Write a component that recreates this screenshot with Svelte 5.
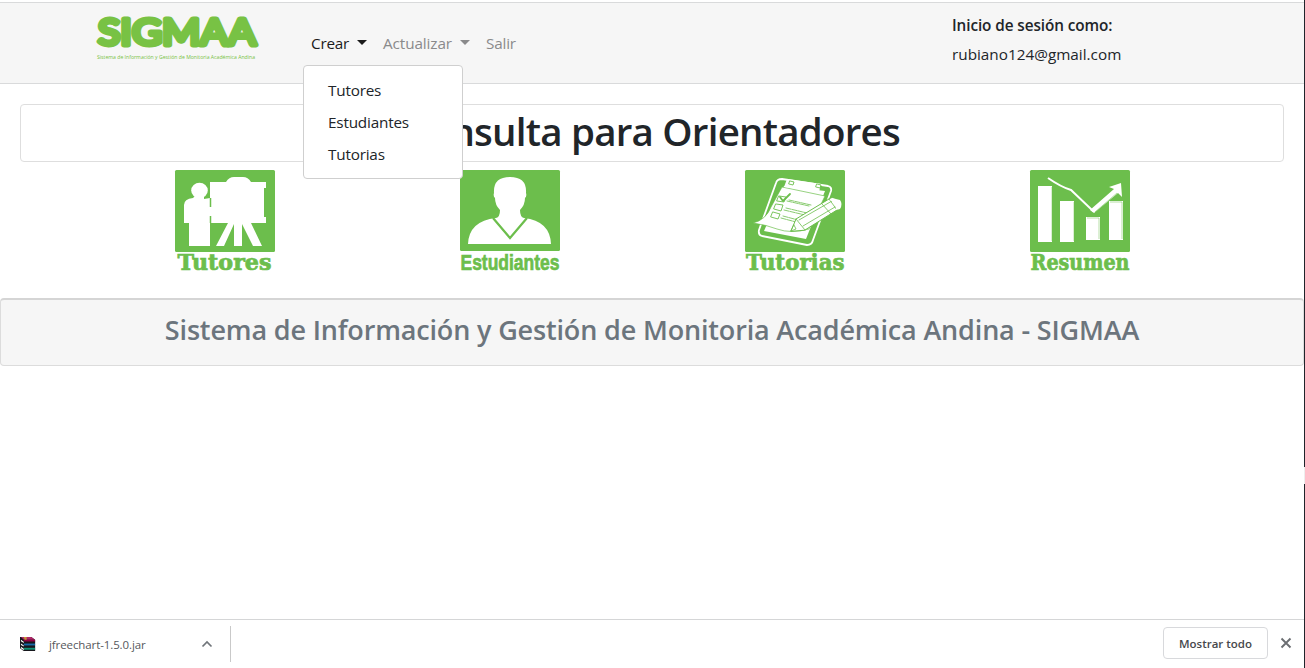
<script>
  const green = '#6cbe4c';
  const menu = ['Tutores', 'Estudiantes', 'Tutorias'];
  const cards = ['Tutores', 'Estudiantes', 'Tutorias', 'Resumen'];
</script>

<div class="page">
  <header>
    <div class="logo">
      <svg width="164" height="54" viewBox="0 0 164 54">
        <text class="brand" x="2" y="34" textLength="158" lengthAdjust="spacingAndGlyphs">SIGMAA</text>
        <text class="tag" x="1" y="48" textLength="158" lengthAdjust="spacingAndGlyphs">Sistema de Información y Gestión de Monitoria Académica Andina</text>
      </svg>
    </div>
    <nav>
      <div class="item active"><span class="crear">Crear</span><i class="caret"></i>
        <div class="menu">
          {#each menu as m}<span>{m}</span>{/each}
        </div>
      </div>
      <div class="item"><span class="act">Actualizar</span><i class="caret"></i></div>
      <div class="item"><span class="salir">Salir</span></div>
    </nav>
    <div class="session">
      <strong>Inicio de sesión como:</strong>
      <span>rubiano124@gmail.com</span>
    </div>
  </header>

  <main>
    <h1><span>Consulta para Orientadores</span></h1>
    <div class="cards">
      {#each cards as c, i}
        <div class="card">
          <svg width="104" height="108" viewBox="0 0 104 108">
            <rect x="0" y="0" width="100" height={i === 1 ? 81 : 82} rx="1.500" fill={green} />
            {#if i === 0}
              <g fill="#fff">
                <ellipse cx="24.500" cy="20.500" rx="8.300" ry="7.800" />
                <path d="M20 26h9v3l6-1V12h16q3-5 8-5h9q5 0 8 5h15v6h-2v29h2v6H76l11 23h-9L67 54V76h-8V54L49 76h-8l12-23H35V76H14V53H9V35q0-6 9-7z" />
              </g>
              <path d="M35.500 28v9M35.500 46v7" stroke={green} stroke-width="1.500" />
            {:else if i === 1}
              <path d="M8 74q1-23 28-26q4-1 4-8q-5-5-5-12q-2-2-1-5Q33 7 50 7t16 16q1 3-1 5q0 7-5 12q0 7 4 8q26 3 27 26z" fill="#fff" />
              <path d="M33 48l17 20l17-20" fill="none" stroke={green} stroke-width="2.200" />
            {:else if i === 2}
              <g stroke-linejoin="round" stroke-linecap="round">
                <path d="M37 9L83 16q4 1 3 5L68 70q-1 5-6 5L17 66q-4-1-3-6L31 13q1-4 6-4z" fill="none" stroke="#fff" stroke-width="1.800" />
                <path d="M39 16L80 21L61 69L19 61z" fill="#fff" />
                <path d="M8 53Q21 50 26 37L37 17L80 26L64 59Q46 64 32 59Q22 55 8 53z" fill="#fff" stroke={green} stroke-width="0.700" />
                <path d="M42 9l34 5l-2 8l-35-5z" fill="#fff" />
                <g fill="none" stroke={green} stroke-width="0.900">
                  <path d="M45 11l4 1l-1 3l-4-1zM72 14l4 1l-1 3l-4-1z" />
                  <path d="M34 26l7 1l-2 5l-7-1zM31 34l7 1l-2 6l-7-2zM28 42l7 2l-2 5l-7-2z" />
                  <path d="M35 27l3 4l7-7" stroke-width="1.800" />
                  <path d="M44 30l22 5M42 31l22 5M41 38l21 5M39 40l21 5M38 46l15 4M36 48l15 4" stroke-dasharray="5 1" stroke-width="0.800" />
                </g>
                <path d="M46 61l5-12l33-20q4-3 7 1l3 4q2 4-2 6L60 60z" fill="#fff" stroke={green} />
                <path d="M51 49l9 11M54 50l33-19M58 56l32-19M77 34l9 10M84 29l8 11M46 61l5-2l-2-4z" fill="none" stroke={green} stroke-width="0.800" />
                <path d="M87 28l8 2q3 4 0 9l-4 1q1-6-6-10z" fill="#fff" />
              </g>
            {:else}
              <g fill="#fff">
                <path d="M8 16h14v56H8zM30 31h14v41H30zM56 47h14v23H56zM79 31h14v39H79z" />
                <path d="M91 13l1 14l-4-4L64 43l-4-3L84 19l-5-2z" />
              </g>
              <path d="M18 8Q31 17 41 20L63 41L87 20" fill="none" stroke="#fff" stroke-width="2" />
              <path d="M22 17v54M44 32v39M57 48h12v21M80 32h12v37M65 42l22-19" fill="none" stroke={green} stroke-width="0.500" />
            {/if}
            <text
              class="label"
              class:condensed={i === 1}
              x={[2.5, 0.5, 1, 0.5][i]}
              y="99.500"
              textLength={[94, 99, 98.5, 99][i]}
              lengthAdjust="spacingAndGlyphs">{c}</text>
          </svg>
        </div>
      {/each}
    </div>
  </main>

  <footer><h2><span>Sistema de Información y Gestión de Monitoria Académica Andina - SIGMAA</span></h2></footer>
  <div class="space"></div>

  <div class="downloads">
    <div class="file">
      <svg width="17" height="17" viewBox="0 0 18 18">
        <path d="M0 1h12l4 3v12H4l-4-3z" fill="#17171c" />
        <path d="M1 1h11l4 3H4z" fill="#b02668" />
        <path d="M4 4h12v2H4z" fill="#8e0041" />
        <path d="M4 6h12v1H4zM4 11h12v1H4z" fill="#17171c" />
        <path d="M4 8h12v2H4z" fill="#1668a8" />
        <path d="M4 12.500h12v2H4z" fill="#119377" />
        <path d="M1 4l3 2v1.500L1 5.500zM1 8l3 2v1L1 9.500zM1 11.500l3 2V15l-3-2z" fill="#fff" />
        <path d="M4 1h3v3H5z" fill="#c79735" />
      </svg>
      <span class="name">jfreechart-1.5.0.jar</span>
      <svg width="12" height="8" viewBox="0 0 12 8"><path d="M1.500 6.500L6 2l4.500 4.500" fill="none" stroke="#70757a" stroke-width="1.700" /></svg>
    </div>
    <div class="actions">
      <button><span>Mostrar todo</span></button>
      <svg width="12" height="12" viewBox="0 0 12 12"><path d="M1.500 1.500l9 9M10.500 1.500l-9 9" stroke="#6b6e72" stroke-width="1.900" /></svg>
    </div>
  </div>
  <div class="edge"></div>
</div>

<style>
  :global(body) { margin: 0; background: #fff; }
  .page {
    position: relative; box-sizing: border-box; width: 1305px; height: 668px;
    padding: 2px 1px 0 0; overflow: hidden; display: flex; flex-direction: column;
    font: 15.300px/24px 'Open Sans', 'Noto Sans', sans-serif; color: #212529; background: #fff;
  }
  header {
    box-sizing: border-box; height: 82px; flex: none; display: flex; align-items: flex-start;
    background: #f6f6f6; border-top: 1px solid #d9dadb; border-bottom: 1px solid #d9dadb;
  }
  .logo { box-sizing: border-box; width: 303px; padding: 8px 0 0 96px; }
  .logo svg { display: block; overflow: visible; }
  .brand {
    font: 400 36px Lato, sans-serif; fill: #78c244; stroke: #78c244;
    stroke-width: 5; stroke-linejoin: round; stroke-linecap: round;
  }
  .tag { font: 5.500px 'Open Sans', sans-serif; fill: #78c244; }
  nav { display: flex; width: 649px; padding-top: 28px; }
  .item {
    position: relative; box-sizing: border-box; padding: 0 8px; display: flex; align-items: center;
    height: 24px; color: #8a8a8b; white-space: nowrap;
  }
  .item.active { color: #1b1b1b; }
  .crear { width: 38px; letter-spacing: -0.250px; }
  .act { width: 69px; letter-spacing: -0.100px; }
  .salir { letter-spacing: -0.200px; }
  .caret { margin: -1px 0 0 8px; border: 5px solid transparent; border-top-color: currentColor; border-bottom: 0; }
  .menu {
    position: absolute; z-index: 2; left: 0; top: 34px; box-sizing: border-box; width: 160px; height: 114px;
    padding: 8px 24px; background: #fff; border: 1px solid #cfcfcf; border-radius: 4px;
    color: #212529; display: flex; flex-direction: column;
  }
  .menu span { line-height: 32px; letter-spacing: -0.200px; }
  .session { padding-top: 10px; display: flex; flex-direction: column; gap: 5px; white-space: nowrap; }
  .session strong { font-weight: 600; letter-spacing: -0.080px; }
  main { flex: none; height: 214px; padding: 20px 20px 0; box-sizing: border-box; }
  h1 {
    margin: 0; height: 56px; border: 1px solid #dedede; border-radius: 4px; text-align: center;
    font-weight: 600; font-size: 38.500px; line-height: 53px; letter-spacing: -0.770px; white-space: nowrap;
  }
  .cards { display: grid; grid-template-columns: repeat(4, 285px); padding: 8px 0 0 62px; }
  .card { padding-left: 93px; }
  .card svg { display: block; overflow: visible; }
  .label {
    font: 700 21.500px 'DejaVu Serif', serif; fill: #6cbe4c; stroke: #6cbe4c; stroke-width: 0.700;
  }
  .condensed { font: 700 22px 'Liberation Sans', sans-serif; }
  footer {
    flex: none; box-sizing: border-box; height: 68px; background: #f6f6f6; text-align: center;
    border: 1px solid #dcdcdc; border-top: 2px solid #d5d5d5; border-radius: 4px; color: #6c757d;
  }
  h2 { margin: 13px 0 0; font-weight: 600; font-size: 27px; line-height: 34px; letter-spacing: -0.160px; white-space: nowrap; }
  .space { flex: 1; }
  .downloads {
    box-sizing: border-box; height: 49px; border-top: 1px solid #d5d6d7; display: flex;
    align-items: flex-start; justify-content: space-between; font-size: 11.500px; line-height: 16px; color: #56585c;
  }
  .file {
    box-sizing: border-box; width: 231px; height: 36px; margin-top: 6px; padding-left: 20px;
    border-right: 1px solid #c9c9c9; display: flex; align-items: center;
  }
  .file svg { flex: none; }
  .name { margin-left: 12px; width: 152px; letter-spacing: -0.100px; padding-top: 1px; }
  .actions { display: flex; align-items: center; gap: 12px; padding: 7px 12px 0 0; }
  button {
    box-sizing: border-box; width: 105px; height: 32px; padding: 0; border: 1px solid #d8d9dc; border-radius: 4px;
    background: #fff; font: 600 11.500px 'Open Sans', sans-serif; color: #46484c; white-space: nowrap;
  }
  .edge {
    position: absolute; right: 0; top: 0; width: 1px; height: 668px;
    background: linear-gradient(#20242b 0 467px, #eee 467px 484px, #20242b 484px);
  }
</style>
